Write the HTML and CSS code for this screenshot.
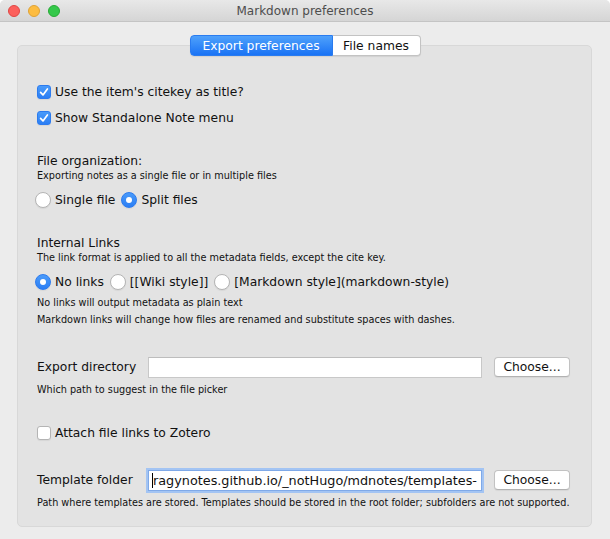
FILE: index.html
```html
<!DOCTYPE html>
<html>
<head>
<meta charset="utf-8">
<link rel="stylesheet" href="styles.css">
</head>
<body>
<div class="window">
  <div class="titlebar">
    <div class="lights">
      <span class="light red"></span>
      <span class="light yellow"></span>
      <span class="light green"></span>
    </div>
    <div class="title">Markdown preferences</div>
    <div></div>
  </div>
  <div class="main">
    <div class="tabs">
      <div class="tab active">Export preferences</div>
      <div class="tab">File names</div>
    </div>
    <div class="panel">
      <div class="row cbrow first">
        <span class="cb on"><svg viewBox="0 0 14 14" width="14" height="14"><path d="M3.6 7.4 L6 9.9 L10.4 3.9" fill="none" stroke="#fff" stroke-width="1.7" stroke-linecap="round" stroke-linejoin="round"/></svg></span>
        <span class="label">Use the item's citekey as title?</span>
      </div>
      <div class="row cbrow second">
        <span class="cb on"><svg viewBox="0 0 14 14" width="14" height="14"><path d="M3.6 7.4 L6 9.9 L10.4 3.9" fill="none" stroke="#fff" stroke-width="1.7" stroke-linecap="round" stroke-linejoin="round"/></svg></span>
        <span class="label">Show Standalone Note menu</span>
      </div>

      <div class="heading h-org">File organization:</div>
      <div class="desc">Exporting notes as a single file or in multiple files</div>
      <div class="row radios r-org">
        <span class="opt"><span class="radio"></span><span class="label">Single file</span></span>
        <span class="opt"><span class="radio on"></span><span class="label">Split files</span></span>
      </div>

      <div class="heading h-links">Internal Links</div>
      <div class="desc">The link format is applied to all the metadata fields, except the cite key.</div>
      <div class="row radios r-links">
        <span class="opt"><span class="radio on"></span><span class="label">No links</span></span>
        <span class="opt"><span class="radio"></span><span class="label">[[Wiki style]]</span></span>
        <span class="opt"><span class="radio"></span><span class="label">[Markdown style](markdown-style)</span></span>
      </div>
      <div class="desc d-nolinks">No links will output metadata as plain text</div>
      <div class="desc d-md">Markdown links will change how files are renamed and substitute spaces with dashes.</div>

      <div class="field f-export">
        <span class="label">Export directory</span>
        <div class="input"></div>
        <div class="button">Choose...</div>
      </div>
      <div class="desc d-field">Which path to suggest in the file picker</div>

      <div class="row cbrow third">
        <span class="cb"></span>
        <span class="label">Attach file links to Zotero</span>
      </div>

      <div class="field f-template">
        <span class="label">Template folder</span>
        <div class="input focus"><span class="caret"></span><span class="value">ragynotes.github.io/_notHugo/mdnotes/templates-</span></div>
        <div class="button">Choose...</div>
      </div>
      <div class="desc d-field">Path where templates are stored. Templates should be stored in the root folder; subfolders are not supported.</div>
    </div>
  </div>
</div>
</body>
</html>
```

FILE: styles.css
```css
html {
  background: #ffffff;
}
body {
  margin: 0;
  width: 610px;
  height: 539px;
  overflow: hidden;
  font-family: "DejaVu Sans", "Liberation Sans", sans-serif;
  font-size: 12.3px;
  color: #111;
}
.window {
  width: 610px;
  height: 539px;
  background: #ececec;
  border-radius: 5px 5px 0 0;
  overflow: hidden;
}
.titlebar {
  height: 22px;
  box-sizing: border-box;
  background: linear-gradient(#e8e8e8, #d5d5d5);
  border-bottom: 1px solid #c4c4c4;
  display: grid;
  grid-template-columns: 1fr auto 1fr;
  align-items: center;
}
.lights {
  display: flex;
  gap: 8px;
  padding-left: 8px;
}
.light {
  width: 12px;
  height: 12px;
  border-radius: 50%;
  box-sizing: border-box;
}
.red { background: #fc605c; border: 1px solid #df4744; }
.yellow { background: #fdbc40; border: 1px solid #dea236; }
.green { background: #34c84a; border: 1px solid #27aa35; }
.title {
  font-size: 12px;
  color: #4d4d4d;
}
.main {
  padding-top: 13px;
}
.tabs {
  display: flex;
  justify-content: center;
  position: relative;
  z-index: 2;
  margin-bottom: -11px;
}
.tab {
  height: 21px;
  box-sizing: border-box;
  display: flex;
  align-items: center;
  justify-content: center;
  background: #fff;
  border: 1px solid #c3c3c3;
  border-left: none;
  border-radius: 0 4px 4px 0;
  box-shadow: 0 1px 1px rgba(0,0,0,0.08);
  width: 88px;
  color: #111;
}
.tab.active {
  width: 143px;
  background: linear-gradient(#4fa1fb, #1a73f5);
  border: 1px solid #2a7cf0;
  border-radius: 4px 0 0 4px;
  color: #fff;
}
.panel {
  margin: 0 18px 0 17px;
  height: 482px;
  box-sizing: border-box;
  background: #e3e3e3;
  border: 1px solid #d8d8d8;
  border-radius: 5px;
  padding: 36px 0 0 19px;
}
.row {
  display: flex;
  align-items: center;
  height: 20px;
}
.label {
  white-space: nowrap;
}
.cbrow {
  gap: 4px;
}
.cbrow.second { margin-top: 6px; }
.cbrow.third { margin-top: 26px; }
.cb {
  width: 14px;
  height: 14px;
  box-sizing: border-box;
  border-radius: 3px;
  background: #fff;
  border: 1px solid #b4b4b4;
  box-shadow: 0 1px 1px rgba(0,0,0,0.06);
  display: block;
}
.cb svg { display: block; margin: -1px; }
.cb.on {
  background: linear-gradient(#4a9bfa, #2b7ef4);
  border-color: #2c7bef;
}
.heading {
  height: 16px;
  line-height: 16px;
}
.h-org { margin-top: 25px; }
.h-links { margin-top: 25px; }
.desc {
  font-size: 9.7px;
  height: 14px;
  line-height: 14px;
}
.radios {
  gap: 6px;
  margin-left: -2px;
}
.r-org { margin-top: 7px; }
.r-links { margin-top: 7px; }
.opt {
  display: flex;
  align-items: center;
  gap: 4px;
}
.radio {
  width: 16px;
  height: 16px;
  box-sizing: border-box;
  border-radius: 50%;
  background: #fff;
  border: 1px solid #b4b4b4;
  box-shadow: 0 1px 1px rgba(0,0,0,0.06);
  position: relative;
}
.radio.on {
  background: linear-gradient(#4a9bfa, #2b7ef4);
  border-color: #2c7bef;
}
.radio.on::after {
  content: "";
  position: absolute;
  left: 4px;
  top: 4px;
  width: 6px;
  height: 6px;
  border-radius: 50%;
  background: #fff;
}
.d-nolinks { margin-top: 4px; }
.d-md { margin-top: 3px; }
.field {
  display: grid;
  grid-template-columns: 99px 334px 76px;
  column-gap: 12px;
  align-items: center;
  height: 22px;
}
.f-export { margin-top: 29px; }
.f-template { margin-top: 26px; }
.d-field { margin-top: 5px; }
.input {
  height: 21px;
  box-sizing: border-box;
  background: #fff;
  border: 1px solid #c8c8c8;
  border-top-color: #bdbdbd;
  overflow: hidden;
  white-space: nowrap;
  display: flex;
  align-items: center;
}
.input.focus {
  border-color: #7fa9e8;
  box-shadow: 0 0 0 2px #a3c4f3;
  padding-left: 3px;
}
.caret {
  width: 1px;
  height: 15px;
  background: #000;
  flex: none;
}
.value {
  font-size: 12.8px;
}
.button {
  height: 20px;
  box-sizing: border-box;
  background: #fff;
  border: 1px solid #c2c2c2;
  border-bottom-color: #b2b2b2;
  border-radius: 4px;
  box-shadow: 0 1px 1px rgba(0,0,0,0.06);
  display: flex;
  align-items: center;
  justify-content: center;
}
```
